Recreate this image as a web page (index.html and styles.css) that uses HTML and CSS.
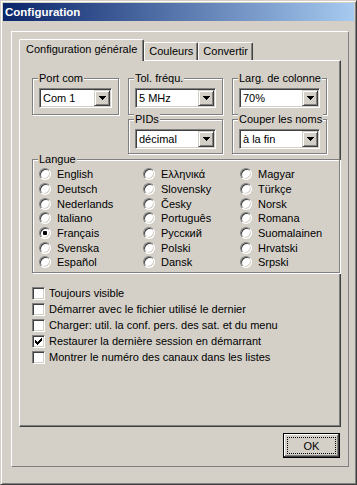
FILE: index.html
```html
<!DOCTYPE HTML>
<html>
    <head>
        <title>Configuration</title>
        <link rel="stylesheet" href="styles.css">
    </head>
    <body>
        <div class="window">
            <div class="titlebar">Configuration</div>
            <div class="frame">
                <div class="tabs">
                    <div class="tab active">Configuration générale</div>
                    <div class="tab">Couleurs</div>
                    <div class="tab">Convertir</div>
                </div>
                <div class="tabpanel">
                    <div class="groups">
                        <div class="group port">
                            <span class="group-label">Port com</span>
                            <div class="combo"><span class="value">Com 1</span><span class="drop"><svg width="7" height="4" shape-rendering="crispEdges"><path d="M0 0H7V1H6V2H5V3H4V4H3V3H2V2H1V1H0Z"/></svg></span></div>
                        </div>
                        <div class="group tol">
                            <span class="group-label">Tol. fréqu.</span>
                            <div class="combo"><span class="value">5 MHz</span><span class="drop"><svg width="7" height="4" shape-rendering="crispEdges"><path d="M0 0H7V1H6V2H5V3H4V4H3V3H2V2H1V1H0Z"/></svg></span></div>
                        </div>
                        <div class="group larg">
                            <span class="group-label">Larg. de colonne</span>
                            <div class="combo"><span class="value">70%</span><span class="drop"><svg width="7" height="4" shape-rendering="crispEdges"><path d="M0 0H7V1H6V2H5V3H4V4H3V3H2V2H1V1H0Z"/></svg></span></div>
                        </div>
                        <div class="group pids">
                            <span class="group-label">PIDs</span>
                            <div class="combo"><span class="value">décimal</span><span class="drop"><svg width="7" height="4" shape-rendering="crispEdges"><path d="M0 0H7V1H6V2H5V3H4V4H3V3H2V2H1V1H0Z"/></svg></span></div>
                        </div>
                        <div class="group couper">
                            <span class="group-label">Couper les noms</span>
                            <div class="combo"><span class="value">à la fin</span><span class="drop"><svg width="7" height="4" shape-rendering="crispEdges"><path d="M0 0H7V1H6V2H5V3H4V4H3V3H2V2H1V1H0Z"/></svg></span></div>
                        </div>
                    </div>

                    <div class="group langue">
                        <span class="group-label">Langue</span>
                        <div class="radios">
                            <div class="option"><span class="radio"></span>English</div>
                            <div class="option"><span class="radio"></span>Deutsch</div>
                            <div class="option"><span class="radio"></span>Nederlands</div>
                            <div class="option"><span class="radio"></span>Italiano</div>
                            <div class="option"><span class="radio on"></span>Français</div>
                            <div class="option"><span class="radio"></span>Svenska</div>
                            <div class="option"><span class="radio"></span>Español</div>
                            <div class="option"><span class="radio"></span>Ελληνικά</div>
                            <div class="option"><span class="radio"></span>Slovensky</div>
                            <div class="option"><span class="radio"></span>Česky</div>
                            <div class="option"><span class="radio"></span>Português</div>
                            <div class="option"><span class="radio"></span>Русский</div>
                            <div class="option"><span class="radio"></span>Polski</div>
                            <div class="option"><span class="radio"></span>Dansk</div>
                            <div class="option"><span class="radio"></span>Magyar</div>
                            <div class="option"><span class="radio"></span>Türkçe</div>
                            <div class="option"><span class="radio"></span>Norsk</div>
                            <div class="option"><span class="radio"></span>Romana</div>
                            <div class="option"><span class="radio"></span>Suomalainen</div>
                            <div class="option"><span class="radio"></span>Hrvatski</div>
                            <div class="option"><span class="radio"></span>Srpski</div>
                        </div>
                    </div>

                    <div class="checks">
                        <div class="check"><span class="box"></span>Toujours visible</div>
                        <div class="check"><span class="box"></span>Démarrer avec le fichier utilisé le dernier</div>
                        <div class="check"><span class="box"></span>Charger: util. la conf. pers. des sat. et du menu</div>
                        <div class="check"><span class="box"><svg width="7" height="7" shape-rendering="crispEdges"><path d="M0 2h1v3H0zM1 3h1v3H1zM2 4h1v3H2zM3 3h1v3H3zM4 2h1v3H4zM5 1h1v3H5zM6 0h1v3H6z"/></svg></span>Restaurer la dernière session en démarrant</div>
                        <div class="check"><span class="box"></span>Montrer le numéro des canaux dans les listes</div>
                    </div>
                </div>
                <div class="actions">
                    <button class="btn default"><span class="focus">OK</span></button>
                </div>
            </div>
        </div>
    </body>
</html>
```

FILE: styles.css
```css
html, body {
    margin: 0;
    background: #d4d0c8;
}

body {
    font-family: "Liberation Sans", Arial, sans-serif;
    font-size: 11px;
    color: #000;
}

.window {
    width: 357px;
    height: 485px;
    box-sizing: border-box;
    border: 1px solid;
    border-color: #d4d0c8 #404040 #404040 #d4d0c8;
    box-shadow: inset 1px 1px #fff, inset -1px -1px #808080;
    padding: 2px;
}

.titlebar {
    height: 18px;
    line-height: 18px;
    padding-left: 2px;
    background: linear-gradient(to right, #0a246a, #a6caf0);
    color: #fff;
    font-weight: bold;
    font-size: 11.5px;
}

.frame {
    margin: 10px 0 0 8px;
    width: 338px;
    height: 436px;
    box-sizing: border-box;
    border: 1px solid;
    border-color: #fff #808080 #808080 #fff;
    padding: 7px;
}

/* tabs */
.tabs {
    display: flex;
    align-items: flex-end;
    height: 21px;
    position: relative;
    z-index: 1;
}

.tab {
    height: 18px;
    box-sizing: border-box;
    padding: 0 4px;
    border: 1px solid;
    border-bottom: 0;
    border-color: #fff #404040 #fff #fff;
    border-radius: 2px 2px 0 0;
    box-shadow: inset -1px 0 #808080;
    line-height: 16px;
    white-space: nowrap;
}

.tab.active {
    height: 22px;
    margin-bottom: -1px;
    padding: 1px 6px 0;
    background: #d4d0c8;
}

.tabpanel {
    height: 367px;
    box-sizing: border-box;
    border: 1px solid;
    border-color: #fff #404040 #404040 #fff;
    box-shadow: inset -1px -1px #808080;
    padding: 11px 0 0 12px;
}

/* group boxes */
.groups {
    display: grid;
    grid-template-columns: 87px 95px 95px;
    grid-template-rows: 41px 39px;
    column-gap: 9px;
}

.group {
    border: 1px solid #808080;
    box-shadow: inset 1px 1px #fff, 1px 1px #fff;
    margin-top: 6px;
    padding: 0 6px;
}

.group-label {
    display: table;
    margin: -7px 0 0 -1px;
    padding: 0 1px;
    line-height: 13px;
    background: #d4d0c8;
    white-space: nowrap;
}

.port { grid-column: 1; grid-row: 1; height: 35px; }
.tol { grid-column: 2; grid-row: 1; height: 35px; }
.larg { grid-column: 3; grid-row: 1; height: 35px; }
.pids { grid-column: 2; grid-row: 2; height: 33px; }
.couper { grid-column: 3; grid-row: 2; height: 33px; }

/* combo box */
.combo {
    display: flex;
    height: 20px;
    margin-top: 3px;
    box-sizing: border-box;
    border: 1px solid;
    border-color: #808080 #fff #fff #808080;
    box-shadow: inset 1px 1px #404040, inset -1px -1px #d4d0c8;
    padding: 1px;
    background: #fff;
}

.combo .value {
    flex: 1;
    padding-left: 2px;
    line-height: 16px;
    white-space: nowrap;
    overflow: hidden;
}

.combo .drop {
    width: 16px;
    box-sizing: border-box;
    display: flex;
    align-items: center;
    justify-content: center;
    background: #d4d0c8;
    border: 1px solid;
    border-color: #d4d0c8 #404040 #404040 #d4d0c8;
    box-shadow: inset 1px 1px #fff, inset -1px -1px #808080;
}

/* language radios */
.langue {
    margin-top: 7px;
    height: 114px;
    box-sizing: border-box;
}

.radios {
    display: grid;
    grid-template-columns: 104px 97px 1fr;
    grid-template-rows: repeat(7, 14.67px);
    grid-auto-flow: column;
    margin-top: 1px;
}

.option {
    display: flex;
    align-items: center;
    white-space: nowrap;
}

.radio {
    width: 12px;
    height: 12px;
    box-sizing: border-box;
    margin-right: 6px;
    border-radius: 50%;
    background: #fff;
    border: 1px solid;
    border-color: #808080 #fff #fff #808080;
    box-shadow: inset 1px 1px #404040, inset -1px -1px #d4d0c8;
}

.radio.on::after {
    content: "";
    display: block;
    width: 4px;
    height: 4px;
    margin: 3px;
    border-radius: 1px;
    background: #000;
}

/* check boxes */
.checks {
    margin-top: 12px;
}

.check {
    display: flex;
    align-items: center;
    height: 16px;
    white-space: nowrap;
}

.box {
    width: 13px;
    height: 13px;
    box-sizing: border-box;
    margin-right: 4px;
    padding: 2px;
    background: #fff;
    border: 1px solid;
    border-color: #808080 #fff #fff #808080;
    box-shadow: inset 1px 1px #404040, inset -1px -1px #d4d0c8;
}

.box svg {
    display: block;
}

/* buttons */
.actions {
    display: flex;
    justify-content: flex-end;
    margin-top: 6px;
    padding-right: 1px;
}

.btn {
    width: 57px;
    height: 25px;
    box-sizing: border-box;
    display: flex;
    padding: 3px;
    margin: 0;
    font: inherit;
    color: #000;
    background: #d4d0c8;
    border: 1px solid #000;
    box-shadow: inset -1px -1px #404040, inset 1px 1px #fff, inset -2px -2px #808080;
}

.btn .focus {
    flex: 1;
    display: flex;
    align-items: center;
    justify-content: center;
    border: 1px dotted #000;
}
```
